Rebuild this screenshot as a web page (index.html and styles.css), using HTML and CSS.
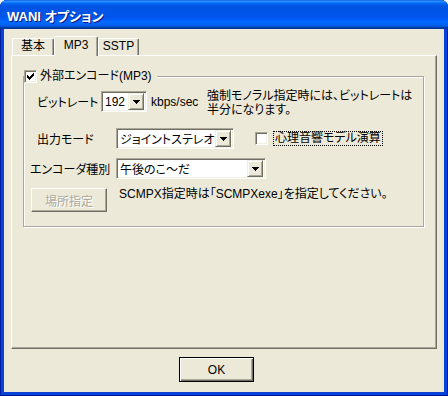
FILE: index.html
```html
<!DOCTYPE html>
<html lang="ja">
<head>
    <meta charset="UTF-8">
    <title>WANI オプション</title>
    <link rel="stylesheet" href="styles.css">
</head>
<body>
<div class="window">
    <div class="titlebar">
        <span class="title">WANI オプション</span>
    </div>

    <div class="client">
        <div class="tabs">
            <div class="tab tab-basic">基本</div>
            <div class="tab tab-mp3 selected">MP3</div>
            <div class="tab tab-sstp">SSTP</div>
        </div>

        <div class="panel">
            <div class="group">
                <div class="group-legend">
                    <span class="checkbox">
                        <svg width="9" height="9" viewBox="0 0 9 9" shape-rendering="crispEdges">
                            <path d="M7 1h1v1h-1z M6 2h2v1h-2z M1 3h1v1h-1z M5 3h3v1h-3z M1 4h2v1h-2z M4 4h3v1h-3z M1 5h5v1h-5z M2 6h3v1h-3z M3 7h1v1h-1z" fill="#000"/>
                        </svg>
                    </span>
                    <span class="legend-text">外部エンコード(MP3)</span>
                </div>

                <div class="row row-bitrate">
                    <span class="label label-bitrate">ビットレート</span>
                    <div class="combo combo-bitrate">
                        <span class="combo-value">192</span>
                        <span class="combo-button"><svg width="7" height="4" viewBox="0 0 7 4" shape-rendering="crispEdges"><path d="M0 0h7v1h-1v1h-1v1h-1v1h-1v-1h-1v-1h-1v-1h-1z" fill="#000"/></svg></span>
                    </div>
                    <span class="unit">kbps/sec</span>
                    <div class="note">
                        <span class="note-line">強制モノラル指定時には、ビットレートは</span>
                        <span class="note-line">半分になります。</span>
                    </div>
                </div>

                <div class="row row-mode">
                    <span class="label label-mode">出力モード</span>
                    <div class="combo combo-mode">
                        <span class="combo-value">ジョイントステレオ</span>
                        <span class="combo-button"><svg width="7" height="4" viewBox="0 0 7 4" shape-rendering="crispEdges"><path d="M0 0h7v1h-1v1h-1v1h-1v1h-1v-1h-1v-1h-1v-1h-1z" fill="#000"/></svg></span>
                    </div>
                    <span class="checkbox checkbox-psy"></span>
                    <span class="focus-label">心理音響モデル演算</span>
                </div>

                <div class="row row-encoder">
                    <span class="label label-encoder">エンコーダ種別</span>
                    <div class="combo combo-encoder">
                        <span class="combo-value">午後のこ～だ</span>
                        <span class="combo-button"><svg width="7" height="4" viewBox="0 0 7 4" shape-rendering="crispEdges"><path d="M0 0h7v1h-1v1h-1v1h-1v1h-1v-1h-1v-1h-1v-1h-1z" fill="#000"/></svg></span>
                    </div>
                </div>

                <div class="row row-locate">
                    <button class="button disabled" disabled>場所指定</button>
                    <span class="hint">SCMPX指定時は「SCMPXexe」を指定してください。</span>
                </div>
            </div>
        </div>

        <div class="footer">
            <button class="button default">OK</button>
        </div>
    </div>
</div>
</body>
</html>
```

FILE: styles.css
```css
:root {
    --face: #ece9d8;
    --light: #f1efe2;
    --shadow: #aca899;
    --dark: #716f64;
    --frame: #0842d6;
}

* {
    margin: 0;
    padding: 0;
    box-sizing: border-box;
}

body {
    background-color: #fff;
    font-family: "Liberation Sans", "Noto Sans CJK JP", sans-serif;
    font-size: 12px;
    font-feature-settings: "palt";
    color: #000;
}

.window {
    width: 448px;
    height: 396px;
    display: flex;
    flex-direction: column;
    background-color: var(--frame);
    border-radius: 7px 7px 0 0;
    box-shadow: inset 1px 0 #001ea0, inset -1px 0 #001ea0, inset 0 -1px #00138c;
    overflow: hidden;
}

/* Title bar */
.titlebar {
    height: 29px;
    flex: none;
    display: flex;
    align-items: center;
    padding-left: 7px;
    background: linear-gradient(to bottom, #0058ee 0%, #3593ff 4%, #288eff 6%, #127dff 8%, #036ffc 10%, #0262ee 14%, #0057e5 20%, #0054e3 24%, #0055eb 56%, #005bf5 66%, #026afe 76%, #0062ef 86%, #0052d6 92%, #0040ab 94%, #003092 100%);
}

.title {
    font-family: "Liberation Sans", "Noto Sans CJK JP", sans-serif;
    font-weight: bold;
    font-size: 13px;
    color: #fff;
    text-shadow: 1px 1px #0a1883;
    padding-top: 1px;
}

/* Client area */
.client {
    flex: 1;
    margin: 0 4px 4px;
    background-color: var(--face);
    display: flex;
    flex-direction: column;
}

.tabs {
    display: flex;
    align-items: flex-end;
    height: 19px;
    margin: 7px 0 0 8px;
}

.tab {
    height: 17px;
    line-height: 15px;
    text-align: center;
    background-color: var(--face);
    border-top: 1px solid #fff;
    border-left: 1px solid #fff;
    border-right: 1px solid var(--dark);
    box-shadow: inset -1px 0 var(--shadow);
    border-radius: 2px 2px 0 0;
}

.tab-basic {
    width: 42px;
}

.tab-mp3 {
    width: 44px;
}

.tab-sstp {
    width: 41px;
}

.tab.selected {
    height: 20px;
    margin-bottom: -1px;
    line-height: 17px;
    position: relative;
    z-index: 1;
}

.panel {
    height: 294px;
    margin: 0 7px;
    border-top: 1px solid #fff;
    border-left: 1px solid #fff;
    border-right: 1px solid var(--dark);
    border-bottom: 1px solid var(--dark);
    box-shadow: inset -1px -1px var(--shadow);
    padding-top: 20px;
}

/* Group box */
.group {
    position: relative;
    height: 151px;
    margin: 0 12px 0 11px;
    border: 1px solid var(--shadow);
    box-shadow: 1px 1px 0 #fff, inset 1px 1px 0 #fff;
    padding: 14px 0 0 6px;
}

.group-legend {
    position: absolute;
    top: -7px;
    left: 0;
    display: flex;
    align-items: center;
    height: 13px;
    padding-right: 5px;
    background-color: var(--face);
}

.legend-text {
    margin-left: 3px;
    line-height: 13px;
}

.checkbox {
    flex: none;
    width: 13px;
    height: 13px;
    background-color: #fff;
    border: 1px solid;
    border-color: var(--shadow) #fff #fff var(--shadow);
    box-shadow: inset 1px 1px var(--dark), inset -1px -1px var(--light);
    padding: 1px;
    display: flex;
}

.checkbox svg {
    display: block;
}

.row {
    display: flex;
    align-items: center;
    height: 21px;
}

.row-bitrate {
    margin-left: 7px;
}

.row-mode {
    margin-top: 16px;
    margin-left: 7px;
}

.row-encoder {
    margin-top: 9px;
}

.row-locate {
    margin-top: 9px;
    margin-left: 1px;
    height: 24px;
}

.label {
    flex: none;
    white-space: nowrap;
}

.label-bitrate {
    width: 64px;
}

.label-mode {
    width: 79px;
}

.label-encoder {
    width: 86px;
}

/* Combo boxes */
.combo {
    flex: none;
    height: 21px;
    display: flex;
    align-items: center;
    background-color: #fff;
    border: 1px solid;
    border-color: var(--shadow) #fff #fff var(--shadow);
    box-shadow: inset 1px 1px var(--dark), inset -1px -1px var(--light);
    padding: 2px 2px 2px 3px;
}

.combo-bitrate {
    width: 46px;
}

.combo-mode {
    width: 118px;
}

.combo-encoder {
    width: 150px;
}

.combo-value {
    flex: 1;
    white-space: nowrap;
    overflow: hidden;
}

.combo-button {
    flex: none;
    width: 16px;
    height: 17px;
    display: flex;
    align-items: center;
    justify-content: center;
    background-color: var(--face);
    border: 1px solid;
    border-color: var(--light) var(--dark) var(--dark) var(--light);
    box-shadow: inset 1px 1px #fff, inset -1px -1px var(--shadow);
}

.unit {
    margin-left: 4px;
    width: 56px;
    flex: none;
}

.note {
    align-self: flex-start;
    display: flex;
    flex-direction: column;
    margin-top: -2px;
    white-space: nowrap;
}

.note-line {
    height: 14px;
    line-height: 14px;
}

.checkbox-psy {
    margin-left: 21px;
}

.focus-label {
    margin-left: 5px;
    padding: 0 1px;
    line-height: 13px;
    border: 1px dotted #000;
    white-space: nowrap;
}

/* Buttons */
.button {
    font: inherit;
    color: #000;
    background-color: var(--face);
    border: 1px solid;
    border-color: #fff var(--dark) var(--dark) #fff;
    box-shadow: inset -1px -1px var(--shadow);
}

.button.disabled {
    width: 76px;
    height: 24px;
    color: var(--shadow);
    text-shadow: 1px 1px #fff;
}

.button.default {
    width: 75px;
    height: 25px;
    border: 1px solid #000;
    box-shadow: inset 1px 1px #fff, inset -1px -1px var(--dark), inset -2px -2px var(--shadow);
}

.hint {
    align-self: flex-start;
    margin-left: 12px;
    margin-top: 0;
    line-height: 12px;
    white-space: nowrap;
}

.footer {
    margin-top: 8px;
    padding-left: 175px;
}
```
